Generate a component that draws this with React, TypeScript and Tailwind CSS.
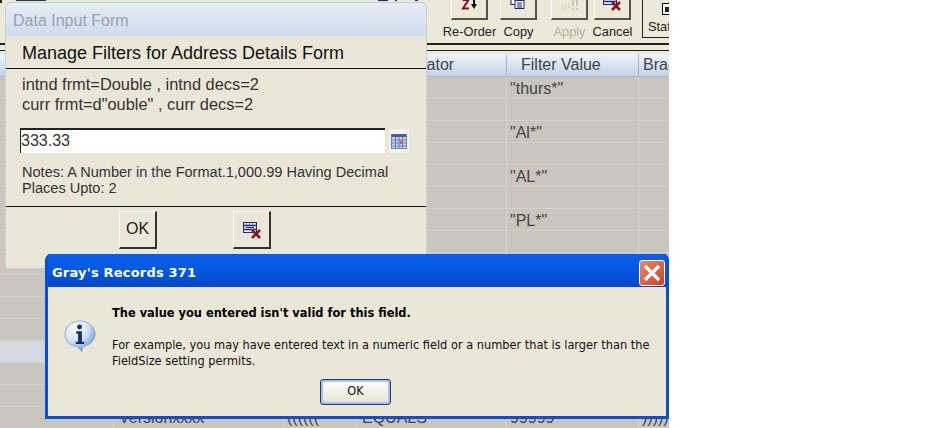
function ReorderIcon() {
  return (
    <svg width="20" height="14" viewBox="0 0 20 14">
      <path d="M3.500 2h6L4 10.500h6" fill="none" stroke="#8a1020" strokeWidth="2" />
      <path d="M15 0v6" stroke="#111" strokeWidth="2" />
      <path d="M12 6h6l-3 5z" fill="#111" />
    </svg>
  );
}

function CopyIcon() {
  return (
    <svg width="18" height="12" viewBox="0 0 18 12">
      <rect x="2" y="-2.500" width="8" height="7" fill="#fff" stroke="#1a237e" />
      <rect x="6" y="0.500" width="9" height="8" fill="#fff" stroke="#1a237e" />
      <path d="M8 3h5M8 5h5M8 7h5" stroke="#1a237e" />
    </svg>
  );
}

function ApplyIcon() {
  return (
    <svg width="20" height="12" viewBox="0 0 20 12">
      <path d="M3 9h2M3 6h2M6 8h2M6 5h2M9 7h2M9 4h2" stroke="#c8c6ba" />
      <path d="M14 0v6M14 8v2M18 0v6M18 8v2" stroke="#bdbbb0" strokeWidth="1.500" />
    </svg>
  );
}

function CancelIcon() {
  return (
    <svg width="20" height="20" viewBox="0 0 20 20">
      <rect x="1.500" y="2.500" width="13" height="10" fill="#eef0fa" stroke="#1d2a6b" />
      <path d="M2 5.500h12M2 9.500h12" stroke="#1d2a6b" strokeWidth="1.500" />
      <path d="M4 4h1M7 4h1M10 4h1M4 7.500h8" stroke="#1d2a6b" />
      <path d="M10 10l8 8M18 10l-8 8" stroke="#8a1020" strokeWidth="2.500" />
    </svg>
  );
}

function CalendarIcon() {
  return (
    <svg width="16" height="16" viewBox="0 0 16 16">
      <rect x="0.500" y="1.500" width="15" height="14" fill="#c9d7f2" stroke="#6b7fb0" />
      <rect x="1" y="1" width="14" height="3" fill="#4a5f98" />
      <path d="M1 7h14M1 10h14M1 13h14M4.500 4v11M8 4v11M11.500 4v11" stroke="#5f79c0" />
      <rect x="9" y="8" width="3" height="3" fill="#d0605a" />
    </svg>
  );
}

function InfoIcon() {
  return (
    <svg width="32" height="32" viewBox="0 0 34 34">
      <defs>
        <radialGradient id="bubble" cx="35%" cy="25%" r="80%">
          <stop offset="0%" stopColor="#ffffff" />
          <stop offset="55%" stopColor="#cfe0f5" />
          <stop offset="100%" stopColor="#5f8fcb" />
        </radialGradient>
      </defs>
      <path
        d="M17 1C8 1 1 7.500 1 15c0 7 5.500 12.500 13 13.500l5 5 1-5.300C27.500 27 33 22 33 15 33 7.500 26 1 17 1z"
        fill="url(#bubble)"
        stroke="#8fa9cc"
      />
      <circle cx="16.500" cy="7.500" r="2.600" fill="#12306e" />
      <path d="M13 12h6v11h2.500v2.500h-9V23H15v-8.500h-2z" fill="#12306e" />
    </svg>
  );
}

function ToolButton({
  label,
  muted,
  className,
  children,
}: {
  label: string;
  muted?: boolean;
  className?: string;
  children?: React.ReactNode;
}) {
  return (
    <div className={`flex w-[37px] flex-col items-center ${className ?? ""}`}>
      <div className="flex h-[20px] w-[37px] items-end justify-center overflow-hidden border-r-2 border-b-2 border-l border-r-[#55534a] border-b-[#55534a] border-l-white pb-[6px]">
        {children}
      </div>
      <span className={`mt-[4px] text-[12.800px] leading-[16px] whitespace-nowrap ${muted ? "text-[#b4b2a8]" : "text-[#222]"}`}>
        {label}
      </span>
    </div>
  );
}

const values = ['"thurs*"', "", '"Al*"', "", '"AL*"', "", '"PL*"', "", "", "", "", "", "", "", ""];

function App() {
  return (
    <div className="relative h-[428px] w-[945px] overflow-hidden bg-white font-['Liberation_Sans',sans-serif]">
      {/* app behind the dialogs */}
      <div className="h-full w-[669px] bg-[#c9c6bd]">
        <div className="relative flex h-[54px] flex-col bg-[#ece9d8]">
          {/* bits of the toolbar that peek out above the form window */}
          <div className="absolute top-0 left-0 flex h-[2px] w-[430px]">
            <div className="h-[3px] w-[2px] bg-[#222]" />
            <div className="ml-[14px] h-[1px] w-[30px] bg-[#333]" />
            <div className="ml-[332px] h-[1px] w-[10px] bg-[#1a237e]" />
            <div className="ml-[7px] h-[1px] w-[2px] bg-[#333]" />
            <div className="ml-[18px] h-[1px] w-[3px] bg-[#1a237e]" />
          </div>
          <div className="flex h-[43px] pl-[451px]">
            <ToolButton label="Re-Order">
              <ReorderIcon />
            </ToolButton>
            <ToolButton label="Copy" className="ml-[12px]">
              <CopyIcon />
            </ToolButton>
            <ToolButton label="Apply" muted className="ml-[14px]">
              <ApplyIcon />
            </ToolButton>
            <ToolButton label="Cancel" className="ml-[6px]">
              <CancelIcon />
            </ToolButton>
            <div className="ml-[11px] h-[38px] flex-1 overflow-hidden border-b border-l border-[#222] pl-[5px] text-[12.800px] leading-[16px] text-[#222]">
              <div className="mt-[3px] ml-[14px] flex h-[12px] w-[10px] items-center justify-center border border-black bg-white">
                <div className="h-[5px] w-[5px] bg-[#222]" />
              </div>
              <span className="mt-[4px] block whitespace-nowrap">Status</span>
            </div>
          </div>
          <div className="h-[2px] bg-[#222]" />
          <div className="mt-[5px] h-[1px] bg-[#222]" />
        </div>
        <div className="grid h-[23px] grid-cols-[113px_170px_73px_150px_132px_31px] border-b border-[#a9b6c8] bg-gradient-to-b from-[#eef4fb] to-[#c3d3e8] text-[16px] leading-[21px] text-[#444]">
          <div />
          <div className="border-l border-[#a9b6c8]" />
          <div className="border-l border-[#a9b6c8]" />
          <div className="border-l border-[#a9b6c8] pl-[34px]">Operator</div>
          <div className="border-l border-[#a9b6c8] pl-[14px]">Filter Value</div>
          <div className="overflow-hidden border-l border-[#a9b6c8] pl-[4px] whitespace-nowrap">Bracket</div>
        </div>
        {values.map((value, i) => (
          <div
            key={i}
            className={`grid h-[22px] grid-cols-[113px_170px_73px_150px_132px_31px] border-b border-[#d4d2ca] text-[16px] leading-[21px] text-[#444] ${i === 12 ? "bg-[#d5dae2]" : ""}`}
          >
            <div />
            <div className="border-l border-[#d4d2ca]" />
            <div className="border-l border-[#d4d2ca]" />
            <div className="border-l border-[#d4d2ca]" />
            <div className="border-l border-[#d4d2ca] pt-[1px] pl-[3px]">{value}</div>
            <div className="border-l border-[#d4d2ca]" />
          </div>
        ))}
        <div className="grid h-[21px] grid-cols-[113px_170px_73px_150px_132px_31px] text-[16px] leading-[21px] text-[#444]">
          <div />
          <div className="border-l border-[#d4d2ca] pl-[5px]">Versionxxxx</div>
          <div className="border-l border-[#d4d2ca] pl-[3px]">((((((</div>
          <div className="border-l border-[#d4d2ca] pl-[5px]">EQUALS</div>
          <div className="border-l border-[#d4d2ca] pl-[3px]">99999</div>
          <div className="overflow-hidden border-l border-[#d4d2ca] pl-[3px]">)))))</div>
        </div>
      </div>

      {/* Data Input Form window */}
      <div className="absolute top-[2px] left-[5px] flex h-[267px] w-[422px] flex-col rounded-t-[6px] border border-[#c2d0e0] bg-[#ebe7d8]">
        <div className="h-[33px] rounded-t-[6px] bg-gradient-to-b from-[#e6edf5] to-[#cfdcec] pt-[9px] pl-[7px] text-[16px] leading-[18px] text-[#9aa3ad]">
          Data Input Form
        </div>
        <div className="mt-[6px] pl-[16px] text-[18px] leading-[22px] text-[#111]">Manage Filters for Address Details Form</div>
        <div className="mt-[4px] h-[1px] bg-[#111]" />
        <div className="mt-[5px] pl-[16px] text-[16.400px] leading-[20px] text-[#333]">
          <div>intnd frmt=Double , intnd decs=2</div>
          <div>curr frmt=d"ouble" , curr decs=2</div>
        </div>
        <div className="mt-[14px] flex items-center pl-[14px]">
          <div className="flex h-[25px] w-[365px] items-center border-t-2 border-l border-t-[#222] border-l-[#222] bg-white pb-[1px] text-[16px] text-[#333]">
            333.33
          </div>
          <div className="ml-[4px] flex h-[24px] w-[20px] items-center justify-center bg-white/50">
            <CalendarIcon />
          </div>
        </div>
        <div className="mt-[11px] pl-[16px] text-[14.550px] leading-[16px] text-[#333]">
          <div>Notes: A Number in the Format.1,000.99 Having Decimal</div>
          <div>Places Upto: 2</div>
        </div>
        <div className="mt-[10px] h-[1px] bg-[#111]" />
        <div className="mt-[4px] flex pl-[113px]">
          <div className="flex h-[38px] w-[38px] items-center justify-center border-t border-r-2 border-b-2 border-l border-t-white border-r-[#333] border-b-[#333] border-l-white pb-[2px] text-[16px] text-[#222]">
            OK
          </div>
          <div className="ml-[76px] flex h-[38px] w-[38px] items-center justify-center border-t border-r-2 border-b-2 border-l border-t-white border-r-[#333] border-b-[#333] border-l-white">
            <CancelIcon />
          </div>
        </div>
      </div>

      {/* XP message box */}
      <div className="absolute top-[254px] left-[45px] flex h-[165px] w-[624px] flex-col rounded-t-[6px] bg-[#0a4fd8] px-[3px] pb-[3px]">
        <div className="flex h-[33px] items-center justify-between bg-gradient-to-b from-[#0a5de8] via-[#0458e0] to-[#0546c6] pt-[4px] pr-[1px] pl-[4px]">
          <span className="text-[13px] font-bold tracking-[0.2px] text-white font-['DejaVu_Sans',sans-serif]">Gray's Records 371</span>
          <div className="flex h-[26px] w-[26px] items-center justify-center rounded-[3px] border border-white bg-gradient-to-br from-[#e88a6a] to-[#c8401c]">
            <svg width="18" height="18" viewBox="0 0 18 18">
              <path d="M2 2l14 14M16 2L2 16" stroke="#fff" strokeWidth="3.200" />
            </svg>
          </div>
        </div>
        <div className="flex flex-1 bg-[#ebe7d8]">
          <div className="w-[64px] pt-[33px] pl-[16px]">
            <InfoIcon />
          </div>
          <div className="flex-1 pt-[18px] text-[11.380px] text-[#111] font-['DejaVu_Sans',sans-serif]">
            <div className="text-[11.430px] leading-[16px] font-bold text-black">The value you entered isn't valid for this field.</div>
            <div className="mt-[16px] leading-[16px]">
              <div className="whitespace-nowrap">For example, you may have entered text in a numeric field or a number that is larger than the</div>
              <div>FieldSize setting permits.</div>
            </div>
            <div className="mt-[10px] ml-[208px] flex h-[26px] w-[71px] items-center justify-center rounded-[3px] border border-[#1c3c78] bg-gradient-to-b from-[#ffffff] to-[#e6e3d6] shadow-[inset_0_0_0_2px_#a8c0ea]">
              OK
            </div>
          </div>
        </div>
      </div>
    </div>
  );
}

export default App;
